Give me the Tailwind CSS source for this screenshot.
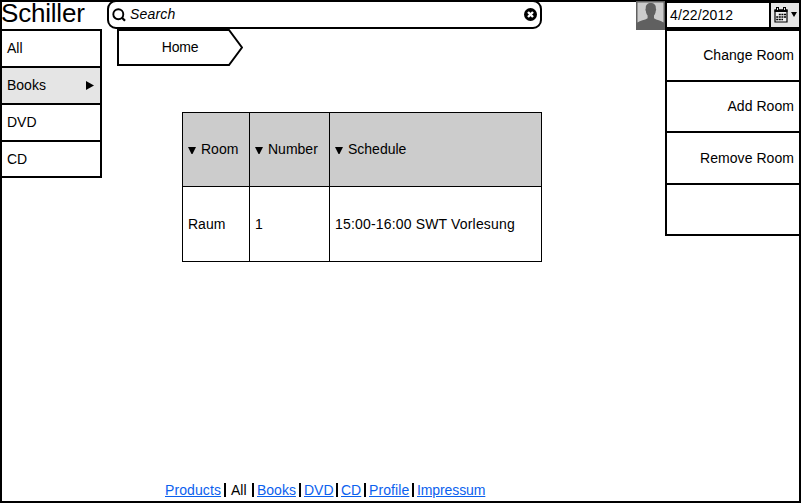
<!DOCTYPE html>
<html lang="en">
<head>
<meta charset="utf-8">
<title>Schiller</title>
<script src="https://cdn.jsdelivr.net/npm/@tailwindcss/browser@4"></script>
</head>
<body class="bg-white">
<div class="flex h-[503px] w-[801px] flex-col border-2 border-black bg-white font-['Liberation_Sans',Arial,sans-serif] text-[14px] leading-4 text-black">
  <div class="flex h-[480px] shrink-0 items-start">
    <aside class="w-[100px] shrink-0">
      <h1 class="-mt-[2px] -ml-px h-[29px] text-[26px] leading-[26px] tracking-[-0.2px]">Schiller</h1>
      <nav class="border-y-2 border-r-2 border-black">
        <a class="flex h-[35px] items-center pb-px pl-[5px]">All</a>
        <a class="flex h-[39px] items-center justify-between border-y-2 border-black bg-[#e5e5e5] pr-[6px] pl-[5px]"><span class="pb-[2px]">Books</span>
          <svg class="h-[9px] w-2" viewBox="0 0 8 9"><path d="M0 0L8 4.5L0 9Z"/></svg>
        </a>
        <a class="flex h-[37px] items-center border-b-2 border-black pb-[2px] pl-[5px]">DVD</a>
        <a class="flex h-[34px] items-center pl-[5px]">CD</a>
      </nav>
    </aside>

    <main class="-mt-[2px] ml-[5px] w-[435px] shrink-0">
      <div class="flex h-[29px] items-center rounded-[9px] border-2 border-black pr-[3px] pl-[3px]">
        <svg class="h-[14px] w-[14px]" viewBox="0 0 14 14" fill="none" stroke="#000"><circle cx="6.3" cy="6.2" r="5" stroke-width="1.9"/><path d="M9.7 9.5L13 12.8" stroke-width="2.3"/></svg>
        <span class="ml-[4px] grow pb-[2px] italic tracking-[0.2px]">Search</span>
        <svg class="h-[13px] w-[13px]" viewBox="0 0 13 13"><circle cx="6.5" cy="6.5" r="6.5"/><path d="M4 4L9 9M9 4L4 9" stroke="#fff" stroke-width="2.4"/></svg>
      </div>
      <div class="ml-[10px] grid h-[37px] w-[126px]">
        <svg class="col-start-1 row-start-1 h-[37px] w-[126px]" viewBox="0 0 126 37"><path d="M1 1H112L125 18.5L112 36H1Z" fill="#fff" stroke="#000" stroke-width="2"/></svg>
        <span class="col-start-1 row-start-1 self-center pb-[2px] text-center tracking-[-0.2px]">Home</span>
      </div>
      <table class="mt-[46px] ml-[75px] h-[150px] w-[360px] table-fixed border-collapse text-left">
        <colgroup><col class="w-[67px]"><col class="w-[80px]"><col></colgroup>
        <thead>
          <tr class="h-[74px] bg-[#cccccc]">
            <th class="border border-black p-0 pb-[2px] pl-[5px] font-normal"><div class="flex items-center gap-[5px]"><svg class="mt-[4px] h-[7px] w-2" viewBox="0 0 8 7"><path d="M0 0H8L4.5 7H3.5Z"/></svg>Room</div></th>
            <th class="border border-black p-0 pb-[2px] pl-[5px] font-normal"><div class="flex items-center gap-[5px]"><svg class="mt-[4px] h-[7px] w-2" viewBox="0 0 8 7"><path d="M0 0H8L4.5 7H3.5Z"/></svg>Number</div></th>
            <th class="border border-black p-0 pb-[2px] pl-[5px] font-normal"><div class="flex items-center gap-[5px]"><svg class="mt-[4px] h-[7px] w-2" viewBox="0 0 8 7"><path d="M0 0H8L4.5 7H3.5Z"/></svg>Schedule</div></th>
          </tr>
        </thead>
        <tbody>
          <tr class="h-[75px]">
            <td class="border border-black p-0 pl-[5px]">Raum</td>
            <td class="border border-black p-0 pl-[5px]">1</td>
            <td class="border border-black p-0 pl-[5px] tracking-[0.17px]">15:00-16:00 SWT Vorlesung</td>
          </tr>
        </tbody>
      </table>
    </main>

    <aside class="-mt-px ml-[94px] flex w-[163px] shrink-0 items-start">
      <svg class="h-[29px] w-[29px] shrink-0" viewBox="0 0 29 29"><path d="M0 0H29V29H0Z" fill="#606060"/><path d="M1.5 1.5H27.5V21.5C25 19.5 20.5 19 18 17.2V14.5C19.2 13.3 19.6 11.5 19.7 10C20.2 9.5 20.4 8 19.8 7.2C20.2 4 18 2 14.8 2C11.5 2 9.5 4 9.8 7.2C9.2 8 9.4 9.5 9.9 10C10 11.5 10.4 13.3 11.6 14.5V17.2C9 19 4 19.5 1.5 21.5Z" fill="#cccccc"/></svg>
      <div class="w-[134px] shrink-0 border-l-2 border-black">
        <div class="flex h-[28px] border-y-2 border-black">
          <span class="w-[102px] pt-[4px] pl-[3px] tracking-[0.1px]">4/22/2012</span>
          <span class="flex grow items-start border-l-2 border-black bg-[#e5e5e5] pt-[4px] pl-[3px]">
            <svg class="h-4 w-[14px]" viewBox="0 0 14 16"><path d="M1 3H13V15H1Z" fill="#eee" stroke="#000" stroke-width="1.2"/><path d="M0.5 2.5H13.5V5H0.5ZM2 0H5V4H2ZM9 0H12V4H9Z"/><path d="M3.5 1V3M10.5 1V3" stroke="#e5e5e5"/><path d="M4.8 7.5H12M2.2 10H12M2.2 12.5H9" stroke="#000" stroke-width="1.7" stroke-dasharray="2 .6"/></svg>
            <svg class="mt-[5px] ml-[3px] h-[5px] w-[6px]" viewBox="0 0 6 5"><path d="M0 0H6L3 5Z"/></svg>
          </span>
        </div>
        <nav class="border-t-2 border-black text-right tracking-[0.05px]">
          <a class="flex h-[51px] items-center justify-end border-b-2 border-black pr-[5px] pb-[2px]">Change Room</a>
          <a class="flex h-[51px] items-center justify-end border-b-2 border-black pr-[5px] pb-[2px]">Add Room</a>
          <a class="flex h-[52px] items-center justify-end border-b-2 border-black pr-[5px]">Remove Room</a>
          <a class="block h-[51px] border-b-2 border-black"></a>
        </nav>
      </div>
    </aside>
  </div>

  <footer class="ml-[163px] flex h-[16px] items-center text-[#0b61ee]">
    <a class="w-[59px] tracking-[0.1px] underline">Products</a><i class="h-[14px] w-[2px] bg-black"></i>
    <span class="w-[26px] pl-[5px] text-black">All</span><i class="h-[14px] w-[2px] bg-black"></i>
    <a class="w-[45px] pl-[3px] underline">Books</a><i class="h-[14px] w-[2px] bg-black"></i>
    <a class="w-[35px] pl-[3px] underline">DVD</a><i class="h-[14px] w-[2px] bg-black"></i>
    <a class="w-[26px] pl-[3px] underline">CD</a><i class="h-[14px] w-[2px] bg-black"></i>
    <a class="w-[46px] pl-[3px] tracking-[0.1px] underline">Profile</a><i class="h-[14px] w-[2px] bg-black"></i>
    <a class="pl-[3px] tracking-[-0.1px] underline">Impressum</a>
  </footer>
</div>
</body>
</html>
